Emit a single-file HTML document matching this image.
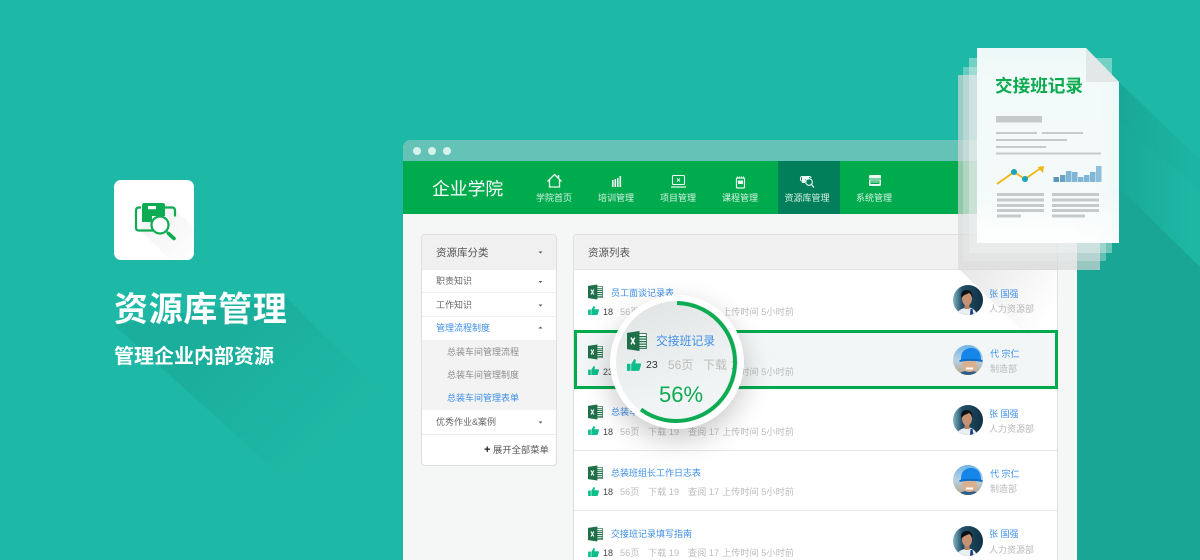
<!DOCTYPE html>
<html lang="zh-CN"><head><meta charset="utf-8"><title>资源库管理</title>
<style>
*{box-sizing:border-box;margin:0;padding:0}
html,body{width:1200px;height:560px;overflow:hidden;background:#1eb9a6}
body{position:relative;font-family:"Liberation Sans","Noto Sans CJK SC",sans-serif}
.a{position:absolute;white-space:nowrap}
.t{position:absolute;white-space:nowrap;line-height:14px;font-size:9px}
svg.full{position:absolute;left:0;top:0}
.blue{color:#3d8fe8}.gr{color:#b9b9b9}.dk{color:#666}
.nav{color:#d8f3e4;width:62px;text-align:center;top:191px}
.ttl{left:611px;color:#3d8fe8}
.m{color:#bdbdbd;font-size:9.2px}
.n{color:#444;font-size:9px}
</style></head><body>

<svg class="full" width="1200" height="560" style="z-index:0">
<defs>
<linearGradient id="sh1" gradientUnits="userSpaceOnUse" x1="240" y1="340" x2="340" y2="440"><stop offset="0" stop-color="#17a090" stop-opacity=".42"/><stop offset="1" stop-color="#17a090" stop-opacity="0"/></linearGradient>
<linearGradient id="sh2" gradientUnits="userSpaceOnUse" x1="1110" y1="130" x2="1190" y2="130"><stop offset="0" stop-color="#17a292" stop-opacity=".8"/><stop offset="1" stop-color="#17a292" stop-opacity=".08"/></linearGradient>
</defs>
<polygon points="285,296 420,431 330,520 114,325" fill="url(#sh1)"/>
<polygon points="1098,60 1200,160 1200,190 1119,120" fill="#1db6a3"/>
<polygon points="1119,82 1200,160 1200,267 1119,187" fill="url(#sh2)"/>
<polygon points="1119,187 1200,267 1200,560 1070,560 1070,187" fill="#19a695"/>
</svg>

<!-- app icon -->
<div class="a" style="left:114px;top:180px;width:80px;height:80px;background:#fff;border-radius:7px;overflow:hidden">
<svg width="80" height="80">
<defs><linearGradient id="ic" x1="0" y1="0" x2="1" y2="1"><stop offset="0" stop-color="#e4e4e4"/><stop offset="1" stop-color="#fff"/></linearGradient></defs>
<polygon points="54,22 80,48 80,80 56,80 26,50" fill="url(#ic)" opacity=".6"/>
<path d="M27 27.500h-2c-2 0-3 1-3 3v17c0 2 1 3 3 3h14M51 27.500h7c2 0 3 1 3 3v6" fill="none" stroke="#0dab52" stroke-width="2.200"/>
<path d="M28 25c0-1 1-2 2-2h19c1 0 2 1 2 2v11H38v6H28z" fill="#0dab52"/>
<rect x="34" y="26" width="8" height="3.200" fill="#fff"/>
<circle cx="46" cy="45" r="8.500" fill="#fff" stroke="#0dab52" stroke-width="2.200"/>
<path d="M52 51l2.500 2.500" stroke="#0dab52" stroke-width="1.800"/>
<path d="M54.500 53.500l5.500 5" stroke="#0dab52" stroke-width="3.600" stroke-linecap="round"/>
</svg></div>

<div class="a" style="left:114px;top:287px;font-size:34px;line-height:46px;letter-spacing:.7px;font-weight:bold;color:#fff">资源库管理</div>
<div class="a" style="left:114px;top:343px;font-size:20px;line-height:28px;font-weight:bold;color:#fff">管理企业内部资源</div>

<!-- window -->
<div class="a" style="left:403px;top:140px;width:674px;height:420px;background:#f5f7f7;border-radius:8px 8px 0 0;overflow:hidden">
  <div class="a" style="left:0;top:0;width:674px;height:21px;background:#64c3b6"></div>
  <div class="a" style="left:10px;top:7px;width:8px;height:8px;border-radius:50%;background:#d6f0ec"></div>
  <div class="a" style="left:25px;top:7px;width:8px;height:8px;border-radius:50%;background:#d6f0ec"></div>
  <div class="a" style="left:40px;top:7px;width:8px;height:8px;border-radius:50%;background:#d6f0ec"></div>
  <div class="a" style="left:0;top:21px;width:674px;height:53px;background:#00ab4e"></div>
  <div class="a" style="left:375px;top:21px;width:62px;height:53px;background:#007f5a"></div>
</div>
<div class="a" style="left:432px;top:176px;font-size:17.800px;line-height:26px;color:#fff">企业学院</div>

<svg class="full" width="1200" height="560" style="z-index:1" fill="none" stroke="#eefaf3">
<path d="M547.500 181.500l7-7 7 7M549.500 180v7h10v-7" stroke-width="1.300"/><path d="M558.500 175v3" stroke-width="1.500"/>
<g fill="#eefaf3" stroke="none"><rect x="612" y="180" width="1.600" height="7"/><rect x="614.500" y="179" width="1.600" height="8"/><rect x="617" y="178" width="1.600" height="9"/><rect x="619.500" y="176" width="1.600" height="11"/></g>
<rect x="672.500" y="175.500" width="12" height="9" rx="1" stroke-width="1.100"/><path d="M671 187h15" stroke-width="1.200"/><path d="M677 178.500l3 3m0-3l-3 3" stroke-width=".9"/>
<rect x="736.500" y="178" width="8" height="10" rx="1" stroke-width="1.200"/><rect x="738" y="180.500" width="5" height="3.500" fill="#eefaf3" stroke="none"/><path d="M737 177h7.500" stroke-width="1" stroke-dasharray="1 1"/>
<path d="M806 181h-4c-1 0-1.500-1-1.500-1.500V178c0-1 1-1.500 1.500-1.500h7c1 0 2 .5 2 1.500" stroke-width="1.100"/><path d="M802 176h7v3.500h-4v3.500h-3z" fill="#eefaf3" stroke="none"/><circle cx="809" cy="182" r="3.300" stroke-width="1.100"/><path d="M811.500 184.500l2.500 3" stroke-width="1.200"/>
<rect x="869" y="175" width="12" height="11" rx="1" fill="#eefaf3" stroke="none"/><path d="M869 179h12" stroke="#00ab4e" stroke-width="1"/><rect x="870.500" y="180.500" width="9" height="3.500" fill="#00ab4e" stroke="none"/><path d="M871 182h8" stroke-width=".8"/>
</svg>
<div class="t nav" style="left:523px;z-index:2">学院首页</div>
<div class="t nav" style="left:585px;z-index:2">培训管理</div>
<div class="t nav" style="left:647px;z-index:2">项目管理</div>
<div class="t nav" style="left:709px;z-index:2">课程管理</div>
<div class="t nav" style="left:776px;z-index:2">资源库管理</div>
<div class="t nav" style="left:843px;z-index:2">系统管理</div>

<!-- sidebar -->
<div class="a" style="left:421px;top:234px;width:136px;height:232px;background:#fff;border:1px solid #dedede;border-radius:4px;overflow:hidden;z-index:1">
  <div class="a" style="left:0;top:0;width:134px;height:35px;background:#f0f0f0"></div>
  <div class="a" style="left:0;top:57px;width:134px;height:1px;background:#efefef"></div>
  <div class="a" style="left:0;top:81px;width:134px;height:1px;background:#efefef"></div>
  <div class="a" style="left:0;top:105px;width:134px;height:70px;background:#f3f3f3"></div>
  <div class="a" style="left:0;top:199px;width:134px;height:1px;background:#efefef"></div>
</div>
<div style="position:absolute;left:0;top:0;z-index:2">
<div class="t" style="left:436px;top:246px;font-size:10.500px;color:#555">资源库分类</div>
<div class="t dk" style="left:436px;top:274px">职责知识</div>
<div class="t dk" style="left:436px;top:298px">工作知识</div>
<div class="t blue" style="left:436px;top:321px">管理流程制度</div>
<div class="t gr" style="left:447px;top:345px;color:#8d8d8d">总装车间管理流程</div>
<div class="t gr" style="left:447px;top:368px;color:#8d8d8d">总装车间管理制度</div>
<div class="t blue" style="left:447px;top:391px">总装车间管理表单</div>
<div class="t dk" style="left:436px;top:415px">优秀作业&amp;案例</div>
<div class="t dk" style="left:484px;top:443px;color:#555;font-size:9.300px"><b style="color:#222;font-size:11px">+</b> 展开全部菜单</div>
</div>
<svg class="full" width="1200" height="560" style="z-index:2" fill="#555">
<path d="M538.500 251.500h4l-2 2z"/><path d="M538.500 281h4l-2 2z"/><path d="M538.500 304.500h4l-2 2z"/><path d="M538.500 328.500h4l-2-2z"/><path d="M538.500 421.500h4l-2 2z"/>
</svg>

<!-- list panel -->
<div class="a" style="left:573px;top:234px;width:485px;height:340px;background:#fff;border:1px solid #dedede;border-radius:4px;z-index:1;overflow:hidden">
  <div class="a" style="left:0;top:0;width:483px;height:35px;background:#f1f1f1;border-bottom:1px solid #e4e4e4"></div>
  <div class="a" style="left:0;top:95px;width:483px;height:60px;background:#f2f6f6"></div>
  <div class="a" style="left:0;top:215px;width:483px;height:1px;background:#e6e6e6"></div>
  <div class="a" style="left:0;top:275px;width:483px;height:1px;background:#e6e6e6"></div>
  <svg class="a" style="left:0;top:0" width="483" height="340">
    <defs><linearGradient id="ps" gradientUnits="userSpaceOnUse" x1="390" y1="40" x2="470" y2="90"><stop offset="0" stop-color="#000" stop-opacity=".09"/><stop offset="1" stop-color="#000" stop-opacity="0"/></linearGradient></defs>
    <polygon points="386,35 483,35 483,130" fill="url(#ps)"/>
  </svg>
</div>
<div class="a" style="left:574px;top:330px;width:484px;height:59px;border:3px solid #00ab4e;z-index:2"></div>
<div class="t" style="left:588px;top:246px;font-size:10.500px;color:#555;z-index:2">资源列表</div>

<svg width="0" height="0" style="position:absolute">
<defs>
<symbol id="xl" viewBox="0 0 16 16">
<rect x="7" y="2" width="8.500" height="12" fill="#fff" stroke="#1f7048" stroke-width=".7"/>
<path d="M9.500 4.500h6M9.500 6.500h6M9.500 8.500h6M9.500 10.500h6M9.500 12.500h6" stroke="#1f7048" stroke-width="1"/>
<path d="M0 1.500L10 0v16L0 14.500z" fill="#1f7048"/>
<path d="M3.200 5.300l3 5.400m0-5.400l-3 5.400" stroke="#fff" stroke-width="1.200" fill="none"/>
</symbol>
<symbol id="th" viewBox="0 0 12 10">
<rect x="0" y="4" width="3" height="6" fill="#0dbd8b"/>
<path d="M3.600 4.200L6.200 0c1.200 0 1.600 1 1.300 2L7 3.600h4c1 0 1.200.8 1 1.500l-1.200 4c-.2.600-.6.900-1.200.9H3.600z" fill="#0dbd8b"/>
</symbol>
<symbol id="a1" viewBox="0 0 30 30">
<defs><linearGradient id="g1" x1="0" y1="0" x2="1" y2="0"><stop offset="0" stop-color="#7fb5c6"/><stop offset=".3" stop-color="#24506a"/><stop offset="1" stop-color="#0f3144"/></linearGradient></defs>
<clipPath id="c1"><circle cx="15" cy="15" r="15"/></clipPath>
<g clip-path="url(#c1)"><rect width="30" height="30" fill="url(#g1)"/>
<path d="M4 30c.5-5 4-6 9-7.500h3c4 1 7 2.500 8 7.500z" fill="#e8f0f3"/>
<path d="M17.500 24l2 0 1 6h-3.500z" fill="#1d3d80"/>
<rect x="11.500" y="18" width="5" height="6" fill="#b98566"/>
<ellipse cx="14" cy="13.500" rx="5" ry="7" fill="#c79272"/>
<path d="M8.500 13c-1.500-6 2-8 5.500-8 4 0 6 3 5.200 8-.8-3-1.500-4-3.200-5-2.500 1.500-5.500 1.500-7.500 5z" fill="#0b1114"/></g>
</symbol>
<symbol id="a2" viewBox="0 0 30 30">
<defs><linearGradient id="g2" x1="0" y1="0" x2="0" y2="1"><stop offset="0" stop-color="#6fb2e6"/><stop offset=".5" stop-color="#b9d3e4"/><stop offset="1" stop-color="#b7a184"/></linearGradient></defs>
<clipPath id="c2"><circle cx="15" cy="15" r="15"/></clipPath>
<g clip-path="url(#c2)"><rect width="30" height="30" fill="url(#g2)"/>
<path d="M6 30c1-3 4-4 10-4 6 0 9 1 10 4z" fill="#2f5d8a"/>
<ellipse cx="16.500" cy="20" rx="7.500" ry="7" fill="#dcb08f"/>
<path d="M13 23.500h7" stroke="#fff" stroke-width="2"/>
<path d="M8 15c-.5-7.500 3.500-12 10-12s10 4.500 10 12z" fill="#1585ea"/>
<path d="M6.500 15c6-1.500 15-1.500 23 0v2c-8-1.500-17-1.500-23 0z" fill="#0f6dc9"/></g>
</symbol>
</defs></svg>

<!-- rows -->
<div style="position:absolute;left:0;top:0;z-index:2">
<svg class="a" style="left:588px;top:284px" width="15" height="16"><use href="#xl" width="15" height="16"/></svg>
<div class="t ttl" style="top:286px">员工面谈记录表</div>
<svg class="a" style="left:588px;top:306px" width="11" height="9"><use href="#th" width="11" height="9"/></svg>
<div class="t n" style="left:603px;top:305px">18</div><div class="t m" style="left:620px;top:305px">56页</div><div class="t m" style="left:722px;top:305px">上传时间 5小时前</div>

<svg class="a" style="left:588px;top:344px" width="15" height="16"><use href="#xl" width="15" height="16"/></svg>
<svg class="a" style="left:588px;top:366px" width="11" height="9"><use href="#th" width="11" height="9"/></svg>
<div class="t n" style="left:603px;top:365px">23</div><div class="t m" style="left:722px;top:365px">上传时间 5小时前</div>

<svg class="a" style="left:588px;top:404px" width="15" height="16"><use href="#xl" width="15" height="16"/></svg>
<div class="t ttl" style="top:405px">总装车间管理表单</div>
<svg class="a" style="left:588px;top:426px" width="11" height="9"><use href="#th" width="11" height="9"/></svg>
<div class="t n" style="left:603px;top:425px">18</div><div class="t m" style="left:620px;top:425px">56页</div><div class="t m" style="left:648px;top:425px">下载 19</div><div class="t m" style="left:688px;top:425px">查阅 17</div><div class="t m" style="left:722px;top:425px">上传时间 5小时前</div>

<svg class="a" style="left:588px;top:465px" width="15" height="16"><use href="#xl" width="15" height="16"/></svg>
<div class="t ttl" style="top:466px">总装班组长工作日志表</div>
<svg class="a" style="left:588px;top:487px" width="11" height="9"><use href="#th" width="11" height="9"/></svg>
<div class="t n" style="left:603px;top:485px">18</div><div class="t m" style="left:620px;top:485px">56页</div><div class="t m" style="left:648px;top:485px">下载 19</div><div class="t m" style="left:688px;top:485px">查阅 17</div><div class="t m" style="left:722px;top:485px">上传时间 5小时前</div>

<svg class="a" style="left:588px;top:526px" width="15" height="16"><use href="#xl" width="15" height="16"/></svg>
<div class="t ttl" style="top:527px">交接班记录填写指南</div>
<svg class="a" style="left:588px;top:548px" width="11" height="9"><use href="#th" width="11" height="9"/></svg>
<div class="t n" style="left:603px;top:546px">18</div><div class="t m" style="left:620px;top:546px">56页</div><div class="t m" style="left:648px;top:546px">下载 19</div><div class="t m" style="left:688px;top:546px">查阅 17</div><div class="t m" style="left:722px;top:546px">上传时间 5小时前</div>

<svg class="a" style="left:953px;top:285px" width="30" height="30"><use href="#a1" width="30" height="30"/></svg>
<div class="t blue" style="left:989px;top:287px">张 国强</div><div class="t gr" style="left:989px;top:302px">人力资源部</div>
<svg class="a" style="left:953px;top:345px" width="30" height="30"><use href="#a2" width="30" height="30"/></svg>
<div class="t blue" style="left:990px;top:347px">代 宗仁</div><div class="t gr" style="left:990px;top:362px">制造部</div>
<svg class="a" style="left:953px;top:405px" width="30" height="30"><use href="#a1" width="30" height="30"/></svg>
<div class="t blue" style="left:989px;top:407px">张 国强</div><div class="t gr" style="left:989px;top:422px">人力资源部</div>
<svg class="a" style="left:953px;top:465px" width="30" height="30"><use href="#a2" width="30" height="30"/></svg>
<div class="t blue" style="left:990px;top:467px">代 宗仁</div><div class="t gr" style="left:990px;top:482px">制造部</div>
<svg class="a" style="left:953px;top:526px" width="30" height="30"><use href="#a1" width="30" height="30"/></svg>
<div class="t blue" style="left:989px;top:527px">张 国强</div><div class="t gr" style="left:989px;top:543px">人力资源部</div>
</div>

<!-- lens -->
<div class="a" style="left:610px;top:295px;width:134px;height:134px;border-radius:50%;background:#fff;box-shadow:0 10px 28px rgba(0,0,0,.22);z-index:3"></div>
<div class="a" style="left:616px;top:301px;width:122px;height:122px;border-radius:50%;background:linear-gradient(160deg,#e0e3e4,#f1f4f4 70%);overflow:hidden;z-index:3">
  <div class="a" style="left:40px;top:30px;font-size:11.800px;line-height:20px;color:#3d8fe8">交接班记录</div>
  <svg class="a" style="left:11px;top:30px" width="20" height="20"><use href="#xl" width="20" height="20"/></svg>
  <svg class="a" style="left:11px;top:58px" width="14" height="12"><use href="#th" width="14" height="12"/></svg>
  <div class="a" style="left:30px;top:56px;font-size:10.500px;line-height:16px;color:#333">23</div>
  <div class="a" style="left:52px;top:54px;font-size:12px;line-height:20px;color:#bbb">56页</div>
  <div class="a" style="left:87px;top:54px;font-size:12px;line-height:20px;color:#bbb">下载 19</div>
  <div class="a" style="left:0;top:78px;width:130px;text-align:center;font-size:22px;line-height:32px;color:#0dab52">56%</div>
</div>
<svg class="full" width="1200" height="560" style="z-index:3">
<path d="M677 303A59 59 0 1 1 641 409.500" fill="none" stroke="#0dab52" stroke-width="4"/>
</svg>

<!-- documents -->
<svg class="full" width="1200" height="560" style="z-index:4">
<defs>
<linearGradient id="pgb" x1="0" y1="1" x2="0" y2="0"><stop offset="0" stop-color="#fff"/><stop offset=".25" stop-color="#f6fbfb"/><stop offset="1" stop-color="#f3fbfa"/></linearGradient></defs>
<rect x="958" y="75" width="142" height="195" fill="#d7d7d7" fill-opacity=".68"/>
<rect x="963" y="67" width="143" height="194" fill="#e8eded" fill-opacity=".35"/>
<rect x="969" y="58" width="143" height="195" fill="#f2f6f6" fill-opacity=".4"/>
<path d="M977 48H1086L1119 82V243H977z" fill="url(#pgb)" fill-opacity=".97"/>
<path d="M1086 48V82H1119z" fill="#e2e7e7"/>
<text x="995" y="92" font-size="17.600" font-weight="bold" fill="#0dab4f" font-family="Liberation Sans,Noto Sans CJK SC,sans-serif">交接班记录</text>
<g fill="#c5cbcb">
<rect x="996" y="116" width="46" height="6.500"/>
<rect x="996" y="132" width="41" height="2"/><rect x="1042" y="132" width="41" height="2"/>
<rect x="996" y="139" width="71" height="2"/><rect x="996" y="146" width="50" height="2"/><rect x="996" y="152.500" width="105" height="2"/>
<rect x="997" y="193" width="47" height="3"/><rect x="997" y="198.500" width="47" height="3"/><rect x="997" y="204" width="47" height="3"/><rect x="997" y="209" width="47" height="3"/><rect x="997" y="214.500" width="24" height="3"/>
<rect x="1052" y="193" width="47" height="3"/><rect x="1052" y="198.500" width="47" height="3"/><rect x="1052" y="204" width="47" height="3"/><rect x="1052" y="209" width="47" height="3"/><rect x="1052" y="214.500" width="33" height="3"/>
</g>
<path d="M997 184L1014 172L1025 179L1041 168" fill="none" stroke="#f0b512" stroke-width="1.800"/>
<path d="M1044 166l-1 7-5.500-6z" fill="#f0b512"/>
<circle cx="1014" cy="172" r="3" fill="#17a6b8"/><circle cx="1025" cy="179" r="3" fill="#17a6b8"/>
<g fill="#7fb5d5"><rect x="1053.500" y="177" width="5.500" height="5" fill="#5e95b8"/><rect x="1060" y="175" width="5.500" height="7" fill="#6ba3c4"/><rect x="1066" y="171" width="5.500" height="11"/><rect x="1072" y="172" width="5.500" height="10"/><rect x="1078" y="177" width="5.500" height="5"/><rect x="1084" y="175" width="5.500" height="7"/><rect x="1090" y="172" width="5.500" height="10"/><rect x="1096" y="166" width="5.500" height="16" fill="#8fbedb"/></g>
</svg>
</body></html>
